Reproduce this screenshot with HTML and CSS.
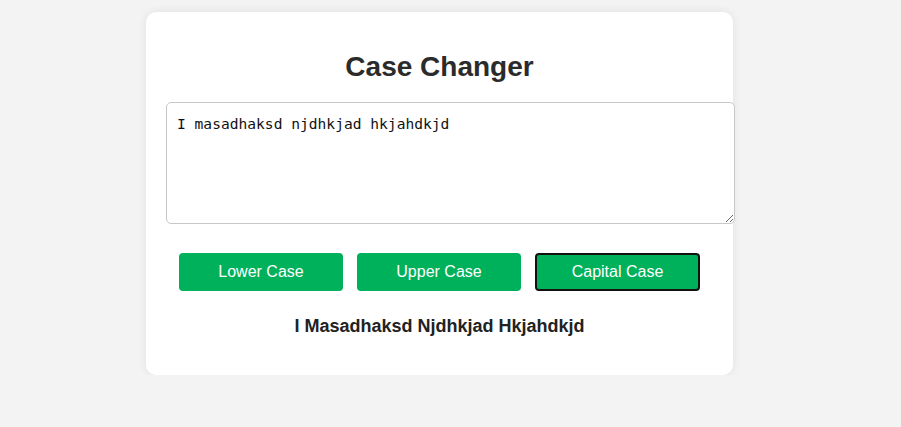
FILE: index.html
```html
<!DOCTYPE html>
<html>
<head>
<meta charset="utf-8">
<link rel="stylesheet" href="styles.css">
</head>
<body>
<div class="card">
  <h1 class="title">Case Changer</h1>
  <textarea class="input" spellcheck="true">I masadhaksd njdhkjad hkjahdkjd</textarea>
  <div class="buttons">
    <button class="btn">Lower Case</button>
    <button class="btn">Upper Case</button>
    <button class="btn active">Capital Case</button>
  </div>
  <p class="result">I Masadhaksd Njdhkjad Hkjahdkjd</p>
</div>
</body>
</html>
```
FILE: styles.css
```css
html, body {
  margin: 0;
  padding: 0;
  background: #f3f3f3;
  font-family: "Liberation Sans", Arial, sans-serif;
}
body {
  padding: 12px 0 0 146px;
}
.card {
  width: 547px;
  padding: 20px;
  background: #ffffff;
  border-radius: 10px;
  box-shadow: 0 0 10px rgba(0,0,0,0.08);
}
.title {
  margin: 22px 0 22px;
  text-align: center;
  font-size: 28px;
  font-weight: bold;
  color: #2b2b2b;
  line-height: 26px;
}
.input {
  display: block;
  width: 547px;
  height: 100px;
  padding: 12px 10px 8px;
  margin: 0;
  border: 1px solid #c8c8c8;
  border-radius: 5px;
  font-family: "DejaVu Sans Mono", monospace;
  font-size: 14.6px;
  color: #111;
  resize: both;
  outline: none;
}
.buttons {
  display: flex;
  justify-content: center;
  gap: 14px;
  margin-top: 29px;
}
.btn {
  width: 164px;
  height: 38px;
  background: #00b15b;
  color: #ffffff;
  border: none;
  border-radius: 4px;
  font-family: "Liberation Sans", Arial, sans-serif;
  font-size: 16px;
}
.btn.active {
  width: 165px;
  border: 2px solid #111;
}
.result {
  margin: 24px 0 18px;
  text-align: center;
  font-size: 18px;
  font-weight: bold;
  color: #222;
  line-height: 22px;
}
```
